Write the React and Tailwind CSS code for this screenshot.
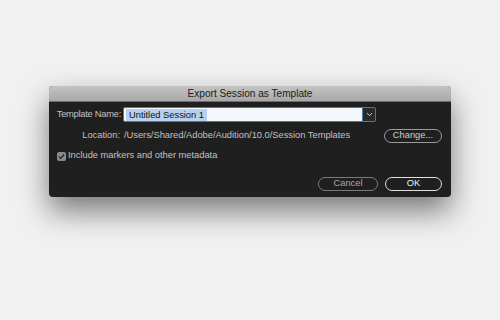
export default function App() {
  const font = { fontFamily: '"Liberation Sans", Arial, sans-serif' };
  return (
    <div className="w-[500px] h-[320px] bg-[#f1f1f1] pt-[86px] pl-[49px]" style={font}>
      <div className="w-[402px] h-[111px] rounded-[4px] bg-[#1f1f1f] shadow-[0_14px_30px_rgba(0,0,0,0.5)] overflow-hidden flex flex-col">
        {/* Title bar */}
        <div className="h-[16px] shrink-0 bg-gradient-to-b from-[#c4c4c4] to-[#a8a8a8] border-b border-[#6e6e6e] flex items-center justify-center text-[10.1px] text-[#1a1a1a] whitespace-nowrap">
          Export Session as Template
        </div>

        <div className="flex-1 pl-[6px] pr-[8px] pt-[5px] text-[9.3px] text-[#c2c2c2] whitespace-nowrap">
          {/* Template name */}
          <div className="flex items-center h-[15px]">
            <div className="w-[66px] shrink-0 flex justify-end">
              <span className="tracking-[-0.25px]">Template Name:</span>
            </div>
            <div className="ml-[2px] w-[253px] h-[15px] flex rounded-[2px] border border-[#4d79a8] bg-[#f4f7fb]">
              <div className="flex-1 flex items-center pl-[2px]">
                <span className="bg-[#b6d0ee] text-[#111] px-[3px] leading-[12px]">Untitled Session 1</span>
              </div>
              <div className="w-[13px] bg-[#2a2a2a] border-l border-[#4d79a8] flex items-center justify-center">
                <svg width="7" height="5" viewBox="0 0 7 5" fill="none">
                  <path d="M1 1.2 L3.5 3.6 L6 1.2" stroke="#cfcfcf" strokeWidth="1" />
                </svg>
              </div>
            </div>
          </div>

          {/* Location */}
          <div className="flex items-center h-[15px] mt-[6px]">
            <div className="w-[66px] shrink-0 flex justify-end pr-[1px]">
              <span>Location:</span>
            </div>
            <span className="ml-[3px] flex-1">/Users/Shared/Adobe/Audition/10.0/Session Templates</span>
            <button className="w-[58px] h-[14px] mr-[1px] rounded-full border border-[#9a9a9a] text-[#cfcfcf] text-[9.3px] leading-none">
              Change...
            </button>
          </div>

          {/* Checkbox */}
          <div className="flex items-center mt-[8px] ml-[2px] h-[10px]">
            <div className="w-[9px] h-[9px] rounded-[2px] bg-[#8a8a8a] flex items-center justify-center">
              <svg width="7" height="7" viewBox="0 0 7 7" fill="none">
                <path d="M1 3.6 L2.8 5.4 L6 1.5" stroke="#1f1f1f" strokeWidth="1.3" />
              </svg>
            </div>
            <span className="ml-[2px]">Include markers and other metadata</span>
          </div>

          {/* Buttons */}
          <div className="flex justify-end gap-[7px] mt-[16px] pr-[1px]">
            <button className="w-[60px] h-[14px] rounded-full border border-[#7a7a7a] text-[#a8a8a8] text-[9.3px] leading-none">
              Cancel
            </button>
            <button className="w-[57px] h-[14px] rounded-full border border-[#e0e0e0] text-[#f2f2f2] text-[9.3px] leading-none">
              OK
            </button>
          </div>
        </div>
      </div>
    </div>
  );
}
